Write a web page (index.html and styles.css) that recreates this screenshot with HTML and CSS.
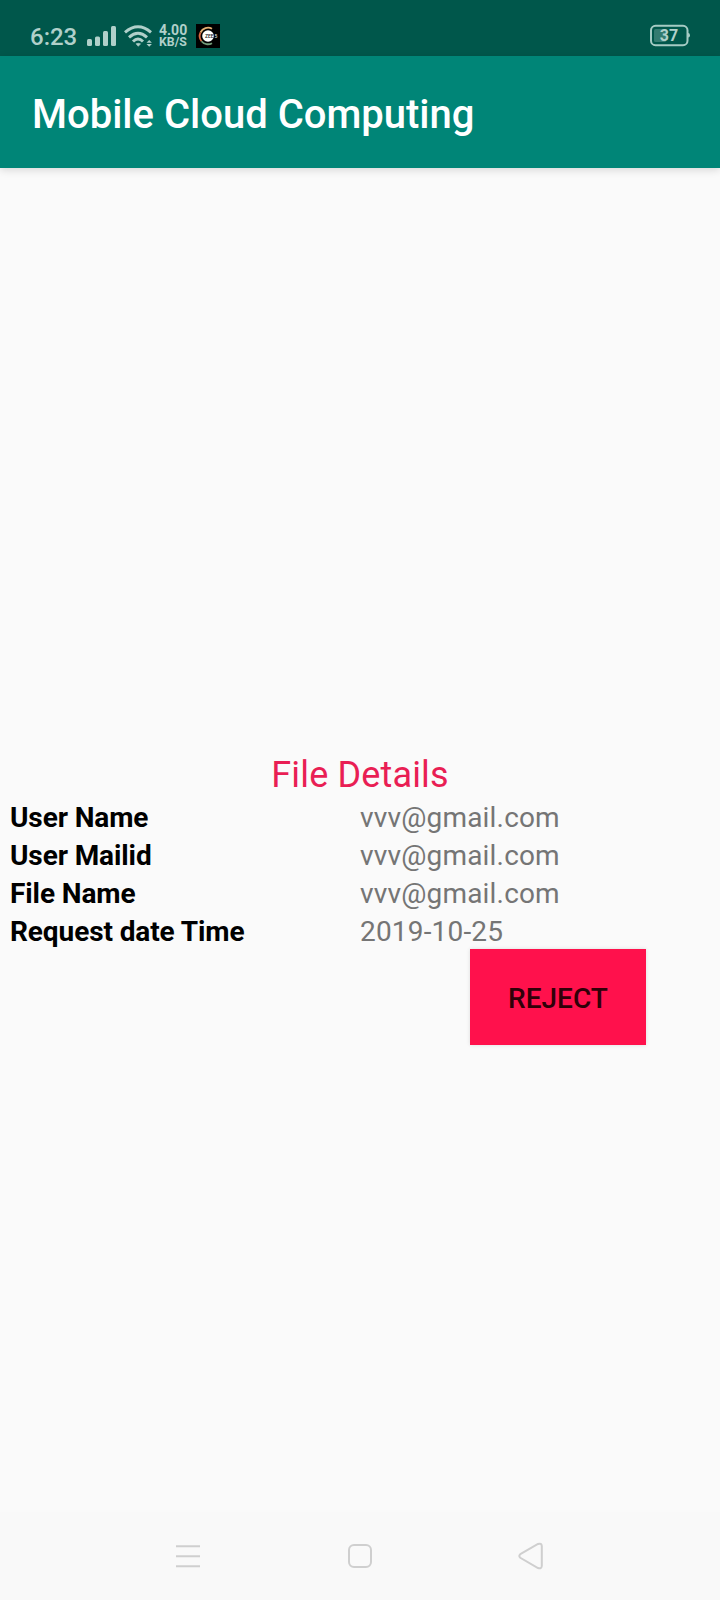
FILE: index.html
```html
<!DOCTYPE html>
<html lang="en">
<head>
<meta charset="utf-8">
<title>Mobile Cloud Computing</title>
<link rel="stylesheet" href="styles.css">
</head>
<body>
<div class="screen">
  <div class="status">
    <span class="time">6:23</span>
    <svg class="icon" width="36" height="56" viewBox="84 0 36 56">
      <g fill="#b0d0ca"><rect x="87" y="39" width="5" height="7" rx="1.5"/><rect x="95" y="36.5" width="5" height="9.5" rx="1.5"/><rect x="103" y="31" width="5" height="15" rx="1.5"/><rect x="111" y="26" width="5" height="20" rx="1.5"/></g>
    </svg>
    <svg class="icon" width="36" height="56" viewBox="120 0 36 56">
      <g fill="none" stroke="#b0d0ca" stroke-width="3"><path d="M125 32.300Q138 21.200 151 32.300"/><path d="M129 37.300Q138 29.300 147 37.300"/><path d="M133 41.500Q138 36.500 143 41.500"/></g>
      <path d="M136 43.800Q138.300 42.800 140.600 43.800L138.300 46.300Z" fill="#b0d0ca" stroke="#b0d0ca" stroke-width=".6"/>
      <path d="M146.500 42.800L149.200 40L151.900 42.800ZM146.500 43.900L149.200 46.700L151.900 43.900Z" fill="#b0d0ca"/>
    </svg>
    <div class="speed"><span class="rate">4.00</span><span class="unit">KB/S</span></div>
    <div class="app">
      <svg class="icon" width="24" height="24" viewBox="0 0 24 24">
        <rect width="24" height="24" fill="#000"/>
        <circle cx="12" cy="12" r="5.800" fill="#fff"/>
        <g fill="none" stroke-width="1.800"><path d="M16 4.700A8.300 8.300 0 0 0 4.500 8.500" stroke="#e5b072"/><path d="M4.500 8.500A8.300 8.300 0 0 0 5.500 17.200" stroke="#d8683f"/><path d="M5.500 17.200A8.300 8.300 0 0 0 16 19.200" stroke="#729b78"/></g>
        <text x="9" y="14" class="logo-text">ZEE</text><text x="18.500" y="14" class="logo-text light">5</text>
      </svg>
    </div>
    <svg class="icon battery" width="80" height="56" viewBox="640 0 80 56">
      <rect x="651" y="25.800" width="36.500" height="19.400" rx="4.500" fill="none" stroke="#a5cbc4" stroke-width="2"/>
      <path d="M688 33Q690 33 690 35.300Q690 37.600 688 37.600Z" fill="#a5cbc4"/>
      <rect x="654" y="29" width="12" height="13" rx="1.500" fill="#347b70"/>
      <text x="669" y="41" class="level">37</text>
    </svg>
  </div>
  <header class="appbar">Mobile Cloud Computing</header>
  <main class="content">
    <h1 class="heading">File Details</h1>
    <dl class="details">
      <dt>User Name</dt><dd>vvv@gmail.com</dd>
      <dt>User Mailid</dt><dd>vvv@gmail.com</dd>
      <dt>File Name</dt><dd>vvv@gmail.com</dd>
      <dt>Request date Time</dt><dd>2019-10-25</dd>
    </dl>
    <button class="reject">REJECT</button>
  </main>
  <nav class="nav">
    <svg class="icon" width="24" height="28" viewBox="0 0 24 28"><path d="M0 4.300H24M0 14.300H24M0 24.300H24" stroke="#cfcfcf" stroke-width="2"/></svg>
    <svg class="icon" width="24" height="28" viewBox="0 0 24 28"><rect x="1" y="3" width="22" height="22" rx="5" fill="none" stroke="#cfcfcf" stroke-width="2"/></svg>
    <svg class="icon back" width="26" height="28" viewBox="0 0 26 28"><path d="M2.300 12.200L20 2Q23.500 .700 23.800 4V24Q23.500 27.300 20 26L2.300 15.800Q.300 14 2.300 12.200Z" fill="none" stroke="#cfcfcf" stroke-width="2"/></svg>
  </nav>
</div>
</body>
</html>
```

FILE: styles.css
```css
body {
  margin: 0;
  font-family: Roboto, sans-serif;
  background: #fafafa;
}
.screen {
  display: flex;
  flex-direction: column;
  width: 720px;
  height: 1600px;
  overflow: hidden;
}
.icon { display: block; flex: none; }
.status {
  display: flex;
  height: 56px;
  background: #00574b;
  color: #b0d0ca;
}
.time {
  box-sizing: border-box;
  width: 84px;
  padding: 9px 0 0 30px;
  font-size: 24px;
  font-weight: 500;
  line-height: 57px;
  height: 56px;
  white-space: nowrap;
}
.speed {
  display: flex;
  flex-direction: column;
  width: 37px;
  padding: 24px 0 0 3px;
  font-weight: 700;
}
.rate { font-size: 14px; line-height: 13px; }
.unit { font-size: 12.3px; line-height: 11px; }
.app { padding-top: 24px; }
.logo-text { font-size: 5px; font-weight: 500; fill: #222; }
.light { fill: #ddd; }
.level {
  font-size: 16px;
  font-weight: 700;
  text-anchor: middle;
  fill: #b0d0ca;
}
.battery { margin-left: auto; }
.appbar {
  box-sizing: border-box;
  height: 112px;
  padding: 3px 32px 0;
  background: #008577;
  color: #fff;
  font-size: 40px;
  font-weight: 500;
  line-height: 112px;
  box-shadow: 0 2px 8px rgba(0, 0, 0, .14);
}
.content {
  display: flex;
  flex: 1;
  flex-direction: column;
  padding-top: 581px;
}
.heading {
  height: 48px;
  margin: 0;
  color: #e91e54;
  font-size: 36px;
  font-weight: 400;
  letter-spacing: .15px;
  line-height: 53px;
  text-align: center;
}
.details {
  display: grid;
  grid-template-columns: 350px 1fr;
  grid-auto-rows: 38px;
  margin: 0;
  padding-left: 10px;
  font-size: 28px;
  line-height: 42px;
}
.details dt { color: #000; font-weight: 700; letter-spacing: -.1px; }
.details dd { margin: 0; color: #757575; letter-spacing: .18px; }
.reject {
  align-self: flex-end;
  width: 176px;
  height: 96px;
  margin-right: 74px;
  padding: 2px 0 0;
  border: 0;
  background: #ff114c;
  color: #300008;
  font: 500 28px Roboto, sans-serif;
  box-shadow: 0 0 4px rgba(0, 0, 0, .12);
}
.nav {
  display: flex;
  align-items: center;
  gap: 148px;
  box-sizing: border-box;
  height: 88px;
  padding: 0 0 0 176px;
  background: #f9f9f9;
}
.back { margin-left: -2px; }
```
